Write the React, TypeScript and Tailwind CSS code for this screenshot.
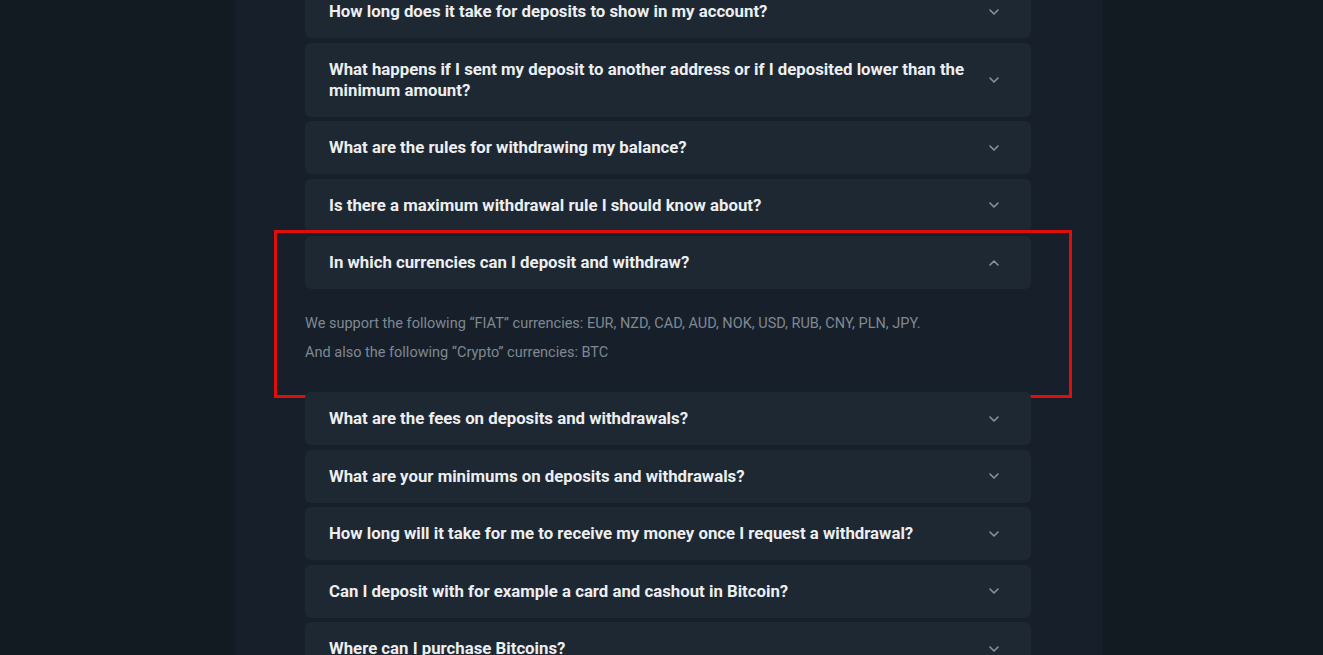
import React from 'react';

const faqs = [
  'How long does it take for deposits to show in my account?',
  'What happens if I sent my deposit to another address or if I deposited lower than the minimum amount?',
  'What are the rules for withdrawing my balance?',
  'Is there a maximum withdrawal rule I should know about?',
  'In which currencies can I deposit and withdraw?',
  'What are the fees on deposits and withdrawals?',
  'What are your minimums on deposits and withdrawals?',
  'How long will it take for me to receive my money once I request a withdrawal?',
  'Can I deposit with for example a card and cashout in Bitcoin?',
  'Where can I purchase Bitcoins?',
];

function Chevron({ up }: { up?: boolean }) {
  return (
    <svg width="12" height="8" viewBox="0 0 12 8" className="shrink-0">
      <path
        d={up ? 'M2 6 L6 2 L10 6' : 'M2 2 L6 6 L10 2'}
        fill="none"
        stroke="#8a939d"
        strokeWidth="1.6"
        strokeLinecap="round"
        strokeLinejoin="round"
      />
    </svg>
  );
}

export default function App() {
  const openIndex = 4;

  return (
    <div
      className="flex h-[655px] w-full overflow-hidden bg-[#131b22]"
      style={{ fontFamily: 'Roboto, "Noto Sans", sans-serif' }}
    >
      <div className="w-[235px] shrink-0" />
      <div className="w-[868px] shrink-0 bg-[#17202a] pl-[70px] pr-[72px]">
        <div className="mt-[-15px] flex flex-col gap-[4.5px]">
          {faqs.map((q, i) => {
            const open = i === openIndex;
            return (
              <div key={i} className="relative">
                <div className="flex items-center justify-between rounded-md bg-[#1e2833] py-4 pl-6 pr-[31px]">
                  <span className="max-w-[650px] text-[16.8px] font-bold leading-[21px] text-[#eceef0]">
                    {q}
                  </span>
                  <Chevron up={open} />
                </div>
                {open && (
                  <>
                    <div className="pt-[19.5px] pb-[21px] text-[14.5px] leading-[29px] text-[#7f8892]">
                      <p>
                        We support the following “FIAT” currencies: EUR, NZD, CAD, AUD, NOK, USD,
                        RUB, CNY, PLN, JPY.
                      </p>
                      <p>And also the following “Crypto” currencies: BTC</p>
                    </div>
                    <div className="pointer-events-none absolute -top-[6px] -bottom-[10px] -left-[31px] -right-[41px] border-[3px] border-[#e00d0d]" />
                  </>
                )}
              </div>
            );
          })}
        </div>
      </div>
      <div className="flex-1" />
    </div>
  );
}
